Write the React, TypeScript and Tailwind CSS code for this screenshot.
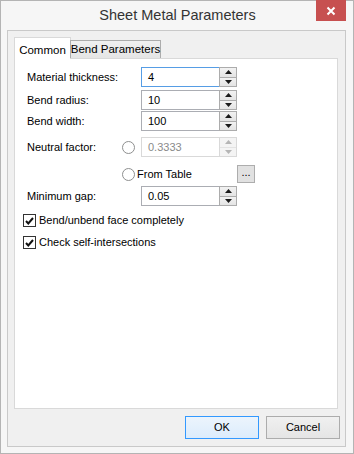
import React from "react";

const font = { fontFamily: '"Liberation Sans", Arial, sans-serif' };

function Spinner({ disabled }: { disabled?: boolean }) {
  const c = disabled ? "#b5b5b5" : "#1a1a1a";
  return (
    <div className={`w-[18px] h-full flex flex-col border ${disabled ? "border-[#d9d9d9]" : "border-[#acacac]"}`}>
      <div className={`flex-1 flex items-center justify-center border-b ${disabled ? "border-[#e3e3e3] bg-[#f4f4f4]" : "border-[#acacac] bg-gradient-to-b from-[#f2f2f2] to-[#e4e4e4]"}`}>
        <svg width="7" height="4" viewBox="0 0 7 4"><path d="M0 4 L3.5 0 L7 4 Z" fill={c} /></svg>
      </div>
      <div className={`flex-1 flex items-center justify-center ${disabled ? "bg-[#f4f4f4]" : "bg-gradient-to-b from-[#f2f2f2] to-[#e4e4e4]"}`}>
        <svg width="7" height="4" viewBox="0 0 7 4"><path d="M0 0 L7 0 L3.5 4 Z" fill={c} /></svg>
      </div>
    </div>
  );
}

function SpinInput({ value, focused, disabled }: { value: string; focused?: boolean; disabled?: boolean }) {
  return (
    <div className="w-[96px] h-full flex">
      <div
        className={`flex-1 h-full flex items-center pl-[6px] border border-r-0 bg-white ${
          focused ? "border-[#569de5]" : disabled ? "border-[#d9d9d9]" : "border-[#abadb3]"
        } ${disabled ? "text-[#8a8a8a]" : "text-black"}`}
      >
        {value}
      </div>
      <Spinner disabled={disabled} />
    </div>
  );
}

function Radio() {
  return <div className="w-[13px] h-[13px] rounded-full border border-[#8e8f8f] bg-white shrink-0" />;
}

function Check({ label }: { label: string }) {
  return (
    <div className="flex items-center h-[13px]">
      <div className="w-[13px] h-[13px] border border-[#333] bg-white flex items-center justify-center shrink-0">
        <svg width="9" height="8" viewBox="0 0 9 8">
          <path d="M1 4 L3.3 6.5 L8 1" stroke="#111" strokeWidth="2" fill="none" />
        </svg>
      </div>
      <span className="ml-[3px] text-black">{label}</span>
    </div>
  );
}

export default function App() {
  return (
    <div style={font} className="w-[354px] h-[454px] bg-[#f6f6f6] border border-[#b4b4b4] flex flex-col text-[11px] text-black">
      <div className="h-[29px] relative flex items-center justify-center">
        <span className="text-[14.5px] text-[#333] mt-[1px] ml-[1px]">Sheet Metal Parameters</span>
        <div className="absolute right-[7px] top-[-1px] w-[30px] h-[21px] bg-[#c75050] flex items-center justify-center">
          <svg width="10" height="10" viewBox="0 0 10 10">
            <path d="M1.5 1.5 L8.5 8.5 M8.5 1.5 L1.5 8.5" stroke="#fff" strokeWidth="2" />
          </svg>
        </div>
      </div>
      <div className="ml-[6px] mr-[7px] mb-[6px] flex-1 border border-[#c9c9c9] bg-[#f0f0f0] flex flex-col pl-[6px] pr-[7px] pt-[6px]">
        <div className="flex items-end h-[21px] relative z-10">
          <div className="w-[57px] h-[22px] bg-white border border-b-0 border-[#d9d9d9] flex items-start justify-center pt-[4px] -mb-[1px] text-[11.5px] whitespace-nowrap">
            Common
          </div>
          <div className="w-[91px] h-[18px] -ml-[1px] bg-gradient-to-b from-[#f0f0f0] to-[#e5e5e5] border border-b-0 border-[#acacac] flex items-center justify-center text-[11.5px] whitespace-nowrap pt-[1px]">
            Bend Parameters
          </div>
        </div>
        <div className="h-[351px] bg-white border border-[#d9d9d9] flex flex-col pl-[8px]">
          <div className="mt-[8px] h-[20px] flex items-center pl-[4px]">
            <div className="w-[114px]">Material thickness:</div>
            <SpinInput value="4" focused />
          </div>
          <div className="mt-[3px] h-[20px] flex items-center pl-[4px]">
            <div className="w-[114px]">Bend radius:</div>
            <SpinInput value="10" />
          </div>
          <div className="mt-[1px] h-[20px] flex items-center pl-[4px]">
            <div className="w-[114px]">Bend width:</div>
            <SpinInput value="100" />
          </div>
          <div className="mt-[6px] h-[20px] flex items-center pl-[4px]">
            <div className="w-[114px] flex items-center justify-between pr-[6px]">
              <span>Neutral factor:</span>
              <Radio />
            </div>
            <SpinInput value="0.3333" disabled />
          </div>
          <div className="mt-[8px] h-[18px] flex items-center pl-[99px]">
            <div className="w-[115px] flex items-center">
              <Radio />
              <span className="ml-[2px]">From Table</span>
            </div>
            <div className="w-[18px] h-[18px] border border-[#adadad] bg-[#e1e1e1] flex items-center justify-center text-[11px] leading-none pb-[3px]">
              ...
            </div>
          </div>
          <div className="mt-[3px] h-[20px] flex items-center pl-[4px]">
            <div className="w-[114px]">Minimum gap:</div>
            <SpinInput value="0.05" />
          </div>
          <div className="mt-[8px]">
            <Check label="Bend/unbend face completely" />
          </div>
          <div className="mt-[9px]">
            <Check label="Check self-intersections" />
          </div>
        </div>
        <div className="mt-[7px] flex justify-end gap-[7px] -mr-[2px]">
          <div className="w-[74px] h-[23px] border border-[#3399ff] bg-gradient-to-b from-[#ecf4fc] to-[#dcecfc] flex items-center justify-center">
            OK
          </div>
          <div className="w-[74px] h-[23px] border border-[#acacac] bg-gradient-to-b from-[#f0f0f0] to-[#e5e5e5] flex items-center justify-center">
            Cancel
          </div>
        </div>
      </div>
    </div>
  );
}
